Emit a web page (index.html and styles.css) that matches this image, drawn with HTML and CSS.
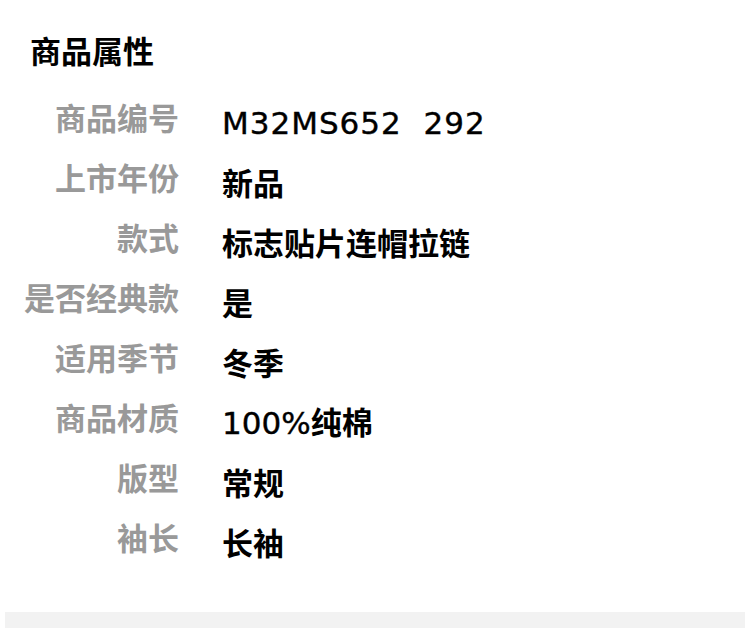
FILE: index.html
```html
<!DOCTYPE html>
<html lang="zh-CN">
<head>
    <meta charset="UTF-8">
    <meta name="viewport" content="width=device-width, initial-scale=1.0">
    <title>商品属性</title>
    <link rel="stylesheet" href="styles.css">
</head>
<body>
    <div class="attrs">
        <h2 class="title">商品属性</h2>
        <div class="row"><span class="label">商品编号</span><span class="value"><span class="num code">M32MS652&nbsp; 292</span></span></div>
        <div class="row"><span class="label">上市年份</span><span class="value">新品</span></div>
        <div class="row"><span class="label">款式</span><span class="value">标志贴片连帽拉链</span></div>
        <div class="row"><span class="label">是否经典款</span><span class="value">是</span></div>
        <div class="row"><span class="label">适用季节</span><span class="value">冬季</span></div>
        <div class="row"><span class="label">商品材质</span><span class="value"><span class="num">100%</span>纯棉</span></div>
        <div class="row"><span class="label">版型</span><span class="value">常规</span></div>
        <div class="row"><span class="label">袖长</span><span class="value">长袖</span></div>
    </div>
    <div class="next-section"></div>
</body>
</html>
```

FILE: styles.css
```css
body {
    margin: 0;
    padding: 0;
    font-family: "Noto Sans CJK SC", "Noto Sans", sans-serif;
    background-color: #ffffff;
    color: #000000;
}

.attrs {
    padding: 30px 0 45px;
}

.title {
    margin: 0 0 17px 30px;
    font-size: 31px;
    line-height: 40px;
    font-weight: 700;
}

.row {
    display: grid;
    grid-template-columns: 179px 1fr;
    column-gap: 43px;
    height: 60px;
    align-items: center;
}

.label {
    text-align: right;
    color: #999999;
    font-size: 31px;
    font-weight: 700;
    line-height: 40px;
}

.value {
    margin-top: 10px;
    font-size: 31px;
    font-weight: 700;
    line-height: 40px;
}

/* latin part of a value: lighter and wider than the cjk face */
.num {
    font-family: "DejaVu Sans", "Noto Sans CJK SC", sans-serif;
    font-weight: 400;
    -webkit-text-stroke: 0.4px #000000;
}

.code {
    letter-spacing: 1px;
}

.next-section {
    margin: 0 5px;
    height: 40px;
    background-color: #f2f2f2;
}
```
